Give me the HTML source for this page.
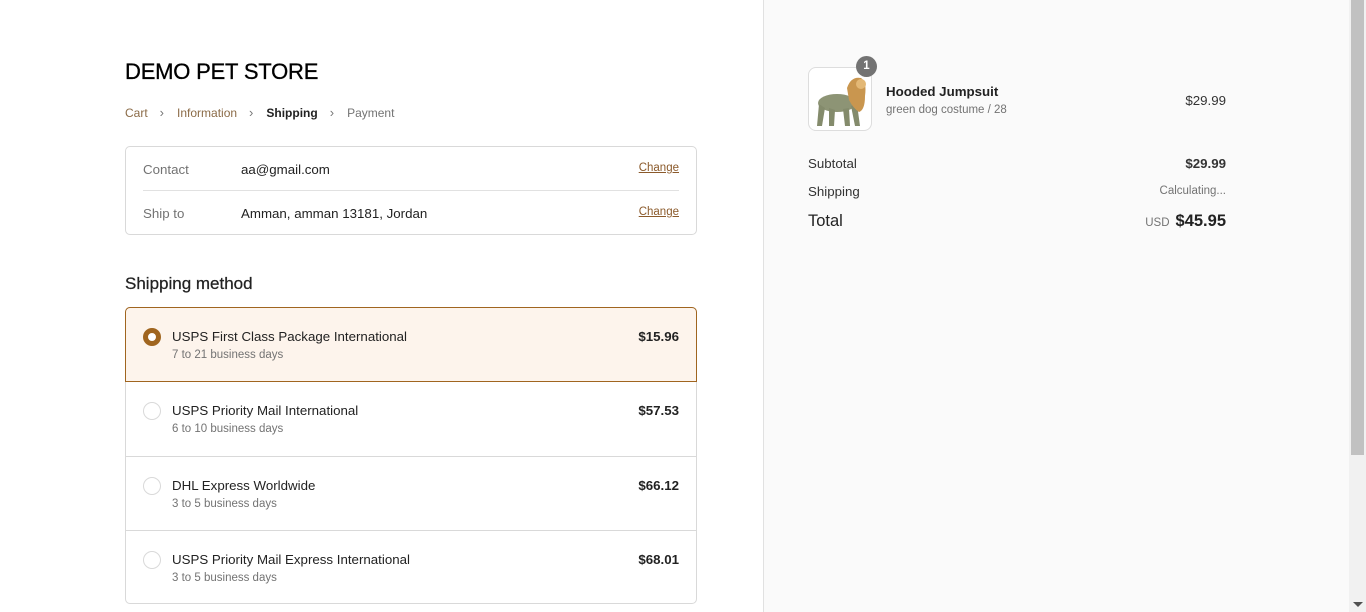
<!DOCTYPE html>
<html><head><meta charset="utf-8"><style>
*{box-sizing:border-box;margin:0;padding:0}
body{width:1366px;height:612px;overflow:hidden;font-family:"Liberation Sans",sans-serif;background:#fff;color:#333;position:relative}
.abs{position:absolute}
.right{left:763px;top:0;width:586px;height:612px;background:#fafafa;border-left:1px solid #e1e1e1}
.sb{left:1349px;top:0;width:17px;height:612px;background:#f1f1f1}
.thumb{left:1351px;top:0;width:13px;height:455px;background:#c1c1c1}
h1{position:absolute;left:125px;top:59px;font-size:22px;font-weight:400;color:#000;letter-spacing:-0.2px;-webkit-text-stroke:0.3px #000}
.bc{position:absolute;left:125px;top:105px;font-size:12px;color:#8b6b47}
.bc span{margin-right:12px}
.bc .ch{color:#777;margin-right:13px;font-size:13px;font-weight:300}
.box{position:absolute;left:125px;width:572px;border:1px solid #d9d9d9;border-radius:5px}
.row{position:absolute;left:17px;right:17px;font-size:13.3px}
.lbl{position:absolute;left:0;color:#737373}
.val{position:absolute;left:98px;color:#222}
.chg{position:absolute;right:0;font-size:11.5px;color:#8b5a2b;text-decoration:underline}
h2{position:absolute;left:125px;top:274px;font-size:17px;font-weight:400;color:#222;-webkit-text-stroke:0.25px #222}
.opt{position:absolute;left:0;width:570px;height:74px;border-top:1px solid #d9d9d9}
.radio{position:absolute;left:17px;top:20px;width:18px;height:18px;border:1px solid #d9d9d9;border-radius:50%;background:#fff}
.on{border:5px solid #a0651f;background:#fff}
.name{position:absolute;left:46px;top:21px;font-size:13.3px;color:#222}
.days{position:absolute;left:46px;top:41px;font-size:11.5px;color:#737373}
.price{position:absolute;right:17px;top:21px;font-size:13.3px;font-weight:700;color:#222}
</style></head><body>
<h1>DEMO PET STORE</h1>
<div class="bc"><span>Cart</span><span class="ch">&#8250;</span><span>Information</span><span class="ch">&#8250;</span><span style="color:#222;font-weight:700">Shipping</span><span class="ch">&#8250;</span><span style="color:#737373">Payment</span></div>
<div class="box" style="top:146px;height:89px">
 <div class="row" style="top:15px;height:20px"><span class="lbl">Contact</span><span class="val">aa@gmail.com</span><span class="chg">Change</span></div>
 <div class="abs" style="left:17px;right:17px;top:43px;border-top:1px solid #e1e1e1"></div>
 <div class="row" style="top:59px;height:20px"><span class="lbl">Ship to</span><span class="val">Amman, amman 13181, Jordan</span><span class="chg">Change</span></div>
</div>
<h2>Shipping method</h2>
<div class="box" style="top:307px;height:297px">
 <div class="opt" style="top:-1px;height:75px;background:#fdf4ec;border:1px solid #a0651f;left:-1px;width:572px;border-radius:5px 5px 0 0;z-index:2"><div class="radio on" style="left:17px;top:20px"></div><div class="name">USPS First Class Package International</div><div class="days">7 to 21 business days</div><div class="price">$15.96</div></div>
 <div class="opt" style="top:74px;border-top:none"><div class="radio"></div><div class="name">USPS Priority Mail International</div><div class="days">6 to 10 business days</div><div class="price">$57.53</div></div>
 <div class="opt" style="top:148px"><div class="radio"></div><div class="name">DHL Express Worldwide</div><div class="days">3 to 5 business days</div><div class="price">$66.12</div></div>
 <div class="opt" style="top:222px"><div class="radio"></div><div class="name">USPS Priority Mail Express International</div><div class="days">3 to 5 business days</div><div class="price">$68.01</div></div>
</div>
<div class="abs right">
 <div class="abs" style="left:44px;top:67px;width:64px;height:64px;background:#fff;border:1px solid #ddd;border-radius:8px;overflow:hidden">
  <svg width="64" height="64" viewBox="0 0 64 64"><ellipse cx="28" cy="35" rx="19" ry="9" fill="#8d9475"/><path d="M10 36 L8 58 L13 58 L16 40Z M20 40 L20 58 L25 58 L26 42Z M34 41 L36 58 L41 58 L40 40Z M42 38 L46 58 L51 58 L48 36Z" fill="#848b6c"/><path d="M38 20 Q42 8 52 10 Q58 14 56 28 Q56 42 50 44 Q44 40 40 32Z" fill="#c9964f"/><ellipse cx="52" cy="16" rx="5" ry="5" fill="#e3b876"/></svg>
 </div>
 <div class="abs" style="left:92px;top:56px;width:21px;height:21px;border-radius:50%;background:#737373;color:#fff;font-size:11.5px;font-weight:700;text-align:center;line-height:21px">1</div>
 <div class="abs" style="left:122px;top:84px;font-size:13.3px;font-weight:700;color:#222">Hooded Jumpsuit</div>
 <div class="abs" style="left:122px;top:104px;font-size:11.5px;color:#737373">green dog costume / 28</div>
 <div class="abs" style="right:123px;top:93px;font-size:13.3px;color:#333">$29.99</div>
 <div class="abs" style="left:44px;top:156px;font-size:13.3px">Subtotal</div>
 <div class="abs" style="right:123px;top:156px;font-size:13.3px;font-weight:700">$29.99</div>
 <div class="abs" style="left:44px;top:184px;font-size:13.3px">Shipping</div>
 <div class="abs" style="right:123px;top:185px;font-size:11.5px;color:#737373">Calculating...</div>
 <div class="abs" style="left:44px;top:212px;font-size:16.5px;color:#222">Total</div>
 <div class="abs" style="right:123px;top:212px;font-size:16.5px;font-weight:700;color:#222"><span style="font-size:11.5px;font-weight:400;color:#737373;margin-right:6px">USD</span>$45.95</div>
</div>
<div class="abs sb"></div><div class="abs thumb"></div>
<div class="abs" style="left:1353px;top:602px;width:0;height:0;border-left:5px solid transparent;border-right:5px solid transparent;border-top:5px solid #505050"></div>
</body></html>
